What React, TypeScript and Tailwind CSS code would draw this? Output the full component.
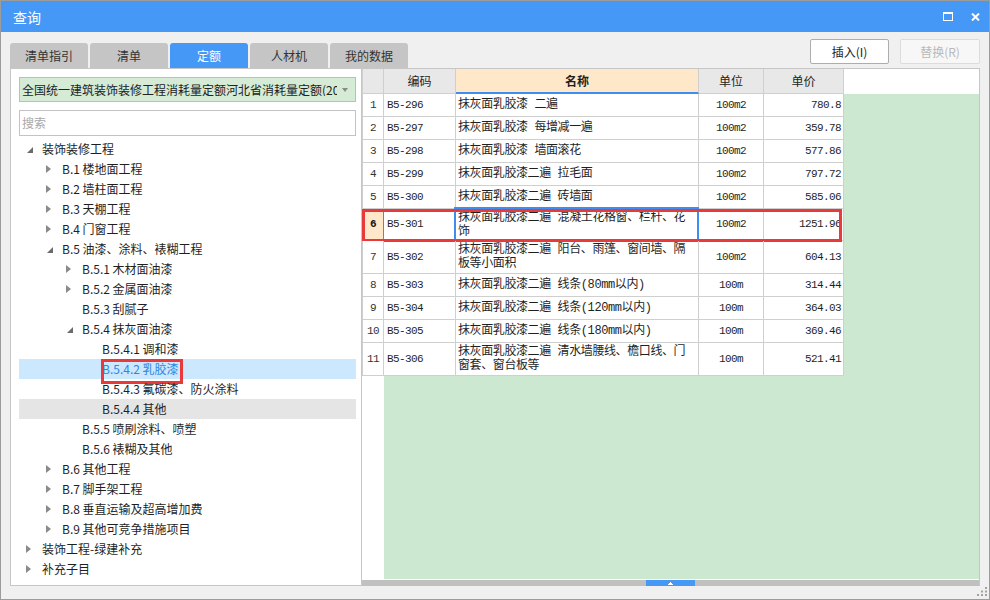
import React from 'react';

type Arrow = 'open' | 'closed' | 'none';

interface TreeNode {
  label: string;
  depth: number;
  arrow: Arrow;
  state?: 'selected' | 'hover';
  mark?: boolean;
}

interface Row {
  n: number;
  code: string;
  name: string[];
  unit: string;
  price: string;
  h: string;
  current?: boolean;
}

const TREE: TreeNode[] = [
  { label: '装饰装修工程', depth: 0, arrow: 'open' },
  { label: 'B.1 楼地面工程', depth: 1, arrow: 'closed' },
  { label: 'B.2 墙柱面工程', depth: 1, arrow: 'closed' },
  { label: 'B.3 天棚工程', depth: 1, arrow: 'closed' },
  { label: 'B.4 门窗工程', depth: 1, arrow: 'closed' },
  { label: 'B.5 油漆、涂料、裱糊工程', depth: 1, arrow: 'open' },
  { label: 'B.5.1 木材面油漆', depth: 2, arrow: 'closed' },
  { label: 'B.5.2 金属面油漆', depth: 2, arrow: 'closed' },
  { label: 'B.5.3 刮腻子', depth: 2, arrow: 'none' },
  { label: 'B.5.4 抹灰面油漆', depth: 2, arrow: 'open' },
  { label: 'B.5.4.1 调和漆', depth: 3, arrow: 'none' },
  { label: 'B.5.4.2 乳胶漆', depth: 3, arrow: 'none', state: 'selected', mark: true },
  { label: 'B.5.4.3 氟碳漆、防火涂料', depth: 3, arrow: 'none' },
  { label: 'B.5.4.4 其他', depth: 3, arrow: 'none', state: 'hover' },
  { label: 'B.5.5 喷刷涂料、喷塑', depth: 2, arrow: 'none' },
  { label: 'B.5.6 裱糊及其他', depth: 2, arrow: 'none' },
  { label: 'B.6 其他工程', depth: 1, arrow: 'closed' },
  { label: 'B.7 脚手架工程', depth: 1, arrow: 'closed' },
  { label: 'B.8 垂直运输及超高增加费', depth: 1, arrow: 'closed' },
  { label: 'B.9 其他可竞争措施项目', depth: 1, arrow: 'closed' },
  { label: '装饰工程-绿建补充', depth: 0, arrow: 'closed' },
  { label: '补充子目', depth: 0, arrow: 'closed' },
];

const ROWS: Row[] = [
  { n: 1, code: 'B5-296', name: ['抹灰面乳胶漆 二遍'], unit: '100m2', price: '780.8', h: 'h-[23px]' },
  { n: 2, code: 'B5-297', name: ['抹灰面乳胶漆 每增减一遍'], unit: '100m2', price: '359.78', h: 'h-[23px]' },
  { n: 3, code: 'B5-298', name: ['抹灰面乳胶漆 墙面滚花'], unit: '100m2', price: '577.86', h: 'h-[23px]' },
  { n: 4, code: 'B5-299', name: ['抹灰面乳胶漆二遍 拉毛面'], unit: '100m2', price: '797.72', h: 'h-[23px]' },
  { n: 5, code: 'B5-300', name: ['抹灰面乳胶漆二遍 砖墙面'], unit: '100m2', price: '585.06', h: 'h-[23px]' },
  { n: 6, code: 'B5-301', name: ['抹灰面乳胶漆二遍 混凝土花格窗、栏杆、花', '饰'], unit: '100m2', price: '1251.96', h: 'h-[32px]', current: true },
  { n: 7, code: 'B5-302', name: ['抹灰面乳胶漆二遍 阳台、雨篷、窗间墙、隔', '板等小面积'], unit: '100m2', price: '604.13', h: 'h-[33px]' },
  { n: 8, code: 'B5-303', name: ['抹灰面乳胶漆二遍 线条(80mm以内)'], unit: '100m', price: '314.44', h: 'h-[23px]' },
  { n: 9, code: 'B5-304', name: ['抹灰面乳胶漆二遍 线条(120mm以内)'], unit: '100m', price: '364.03', h: 'h-[23px]' },
  { n: 10, code: 'B5-305', name: ['抹灰面乳胶漆二遍 线条(180mm以内)'], unit: '100m', price: '369.46', h: 'h-[23px]' },
  { n: 11, code: 'B5-306', name: ['抹灰面乳胶漆二遍 清水墙腰线、檐口线、门', '窗套、窗台板等'], unit: '100m', price: '521.41', h: 'h-[33px]' },
];

const TABS = ['清单指引', '清单', '定额', '人材机', '我的数据'];

// depth -> indent, written out so tailwind picks them up
const INDENT = ['pl-0', 'pl-[20px]', 'pl-[40px]', 'pl-[60px]'];

const mono = "font-['Liberation_Mono','Noto_Sans_CJK_SC',monospace] text-[11px] tracking-[-0.6px]";

const TreeArrow: React.FC<{ type: Arrow }> = ({ type }) => {
  if (type === 'closed') {
    return (
      <svg width="5" height="8" viewBox="0 0 5 8" className="ml-[7px]">
        <path d="M0 0 L5 4 L0 8 Z" fill="#8a8a8a" />
      </svg>
    );
  }
  if (type === 'open') {
    return (
      <svg width="6" height="6" viewBox="0 0 6 6" className="ml-[8px] mt-[2px]">
        <path d="M6 0 L6 6 L0 6 Z" fill="#6b6b6b" />
      </svg>
    );
  }
  return null;
};

const App: React.FC = () => {
  return (
    <div className="w-[990px] h-[600px] border border-[#9c9c9c] flex flex-col bg-[#f0f0f0] font-['Noto_Sans_CJK_SC',sans-serif] text-[#1f1f1f] overflow-hidden">
      {/* Title bar */}
      <div className="h-[31px] shrink-0 bg-[#4598f6] flex items-center justify-between pl-[12px] pr-[9px]">
        <span className="text-[14px] text-white leading-none">查询</span>
        <div className="flex items-center gap-[18px]">
          <svg width="10" height="9" viewBox="0 0 10 9">
            <rect x="0.5" y="1" width="9" height="7.5" fill="none" stroke="#fff" strokeWidth="1" />
            <rect x="0" y="0" width="10" height="2" fill="#fff" />
          </svg>
          <svg width="9" height="8" viewBox="0 0 9 8">
            <path d="M1 0.5 L8 7.5 M8 0.5 L1 7.5" stroke="#fff" strokeWidth="2" />
          </svg>
        </div>
      </div>

      {/* Tabs + buttons */}
      <div className="h-[36px] shrink-0 flex justify-between px-[9px]">
        <div className="flex items-end gap-[2px]">
          {TABS.map(t => (
            <div
              key={t}
              className={`w-[78px] h-[25px] rounded-t-[3px] flex items-center justify-center text-[12px] ${t === '定额' ? 'bg-[#4598f6] text-white' : 'bg-[#c5c5c5] text-[#333]'}`}
            >
              {t}
            </div>
          ))}
        </div>
        <div className="flex gap-[11px] pt-[7px]">
          <div className="w-[79px] h-[25px] rounded-[2px] border border-[#adadad] bg-white flex items-center justify-center text-[12px] text-[#222]">
            插入(I)
          </div>
          <div className="w-[80px] h-[25px] rounded-[2px] border border-[#dcdcdc] bg-[#f7f7f7] flex items-center justify-center text-[12px] text-[#b9b9b9]">
            替换(R)
          </div>
        </div>
      </div>

      {/* Panes */}
      <div className="h-[518px] shrink-0 flex px-[9px]">
        {/* Left tree pane */}
        <div className="w-[352px] shrink-0 bg-white border border-[#c6c6c6] flex flex-col pt-[8px] pl-[8px] pr-[5px]">
          <div className="h-[25px] shrink-0 border border-[#b7c2b7] bg-[#d5ebd5] flex items-center pl-[2px]">
            <div className="w-[315px] overflow-hidden whitespace-nowrap text-[12px] text-[#222] leading-none">
              全国统一建筑装饰装修工程消耗量定额河北省消耗量定额(2012)
            </div>
            <svg width="6" height="4" viewBox="0 0 6 4" className="ml-[5px]">
              <path d="M0 0 L6 0 L3 4 Z" fill="#8a8a8a" />
            </svg>
          </div>
          <div className="mt-[8px] h-[26px] shrink-0 border border-[#c3c3c3] bg-white flex items-center pl-[2px] text-[12px] text-[#a8a8a8]">
            搜索
          </div>
          <div className="mt-[3px] flex flex-col">
            {TREE.map(node => (
              <div
                key={node.label}
                className={`relative h-[20px] flex items-center ${INDENT[node.depth]} ${node.state === 'selected' ? 'bg-[#cce8ff]' : node.state === 'hover' ? 'bg-[#e5e5e5]' : ''}`}
              >
                <div className="w-[23px] shrink-0 flex items-center">
                  <TreeArrow type={node.arrow} />
                </div>
                <span className={`text-[12px] whitespace-nowrap leading-none ${node.state === 'selected' ? 'text-[#2e86e2]' : 'text-[#1f1f1f]'}`}>
                  {node.label}
                </span>
                {node.mark && (
                  <div className="absolute left-[82px] top-0 w-[82px] h-[25px] border-[3px] border-[#e8393b]" />
                )}
              </div>
            ))}
          </div>
        </div>

        {/* Right table pane */}
        <div className="flex-1 bg-white border-t border-r border-[#c6c6c6] flex flex-col">
          {/* Header */}
          <div className="h-[25px] shrink-0 flex text-[12px]">
            <div className="w-[22px] shrink-0 bg-[#e8e8e8] border-l border-r border-b border-[#cfcfcf]" />
            <div className="w-[72px] shrink-0 bg-[#e8e8e8] border-r border-b border-[#cfcfcf] flex items-center justify-center">编码</div>
            <div className="w-[243px] shrink-0 bg-[#fee8c9] border-r border-[#cfcfcf] border-b-2 border-b-[#3d8ef0] flex items-center justify-center font-bold">名称</div>
            <div className="w-[65px] shrink-0 bg-[#e8e8e8] border-r border-b border-[#cfcfcf] flex items-center justify-center">单位</div>
            <div className="w-[80px] shrink-0 bg-[#e8e8e8] border-r border-b border-[#cfcfcf] flex items-center justify-center">单价</div>
            <div className="flex-1 bg-white" />
          </div>

          {/* Rows */}
          {ROWS.map(r => (
            <div key={r.n} className={`relative shrink-0 flex ${r.h}`}>
              <div
                className={`w-[22px] shrink-0 border-l border-b border-[#cfcfcf] flex items-center justify-center ${mono} ${r.current ? 'bg-[#fee8c9] font-bold border-r border-r-[#3d8ef0] text-[#111]' : 'bg-white border-r text-[#333]'}`}
              >
                {r.n}
              </div>
              <div className={`w-[72px] shrink-0 border-r border-b border-[#cfcfcf] flex items-center pl-[3px] ${mono}`}>
                {r.code}
              </div>
              <div className="w-[243px] shrink-0 border-r border-b border-[#cfcfcf] flex flex-col justify-center pl-[2px] font-['Liberation_Mono','Noto_Sans_CJK_SC',monospace] text-[12px] leading-[14px] tracking-[-0.4px]">
                {r.name.map(l => (
                  <span key={l} className="whitespace-nowrap">{l}</span>
                ))}
              </div>
              <div className={`w-[65px] shrink-0 border-r border-b border-[#cfcfcf] flex items-center justify-center ${mono}`}>
                {r.unit}
              </div>
              <div className={`w-[80px] shrink-0 border-r border-b border-[#cfcfcf] flex items-center justify-end pr-[2px] ${mono}`}>
                {r.price}
              </div>
              <div className="flex-1 bg-[#cde8d1]" />
              {r.current && (
                <>
                  <div className="absolute left-[92px] top-[-2px] w-[245px] h-[34px] border-2 border-[#3d8ef0]" />
                  <div className="absolute left-0 top-0 w-[480px] h-[33px] border-[3px] border-[#e8393b]" />
                </>
              )}
            </div>
          ))}

          {/* Empty area */}
          <div className="flex-1 flex">
            <div className="w-[22px] shrink-0 bg-white" />
            <div className="flex-1 bg-[#cde8d1]" />
          </div>
          <div className="h-px shrink-0 bg-white" />
          <div className="h-[6px] shrink-0 bg-[#c0c0c0] flex">
            <div className="w-[284px] shrink-0" />
            <div className="w-[49px] bg-[#4598f6] flex items-center justify-center">
              <svg width="5" height="3" viewBox="0 0 5 3">
                <path d="M2 0 H3 V1 H4 V2 H5 V3 H0 V2 H1 V1 H2 Z" fill="#fff" />
              </svg>
            </div>
          </div>
        </div>
      </div>

      {/* Bottom strip with grip */}
      <div className="flex-1 flex justify-end items-end pr-[2px] pb-[3px]">
        <svg width="10" height="9" viewBox="0 0 10 9">
          <rect x="8" y="0" width="2" height="2" fill="#a3a3a3" />
          <rect x="4" y="3.5" width="2" height="2" fill="#a3a3a3" />
          <rect x="8" y="3.5" width="2" height="2" fill="#a3a3a3" />
          <rect x="0" y="7" width="2" height="2" fill="#a3a3a3" />
          <rect x="4" y="7" width="2" height="2" fill="#a3a3a3" />
          <rect x="8" y="7" width="2" height="2" fill="#a3a3a3" />
        </svg>
      </div>
    </div>
  );
};

export default App;
